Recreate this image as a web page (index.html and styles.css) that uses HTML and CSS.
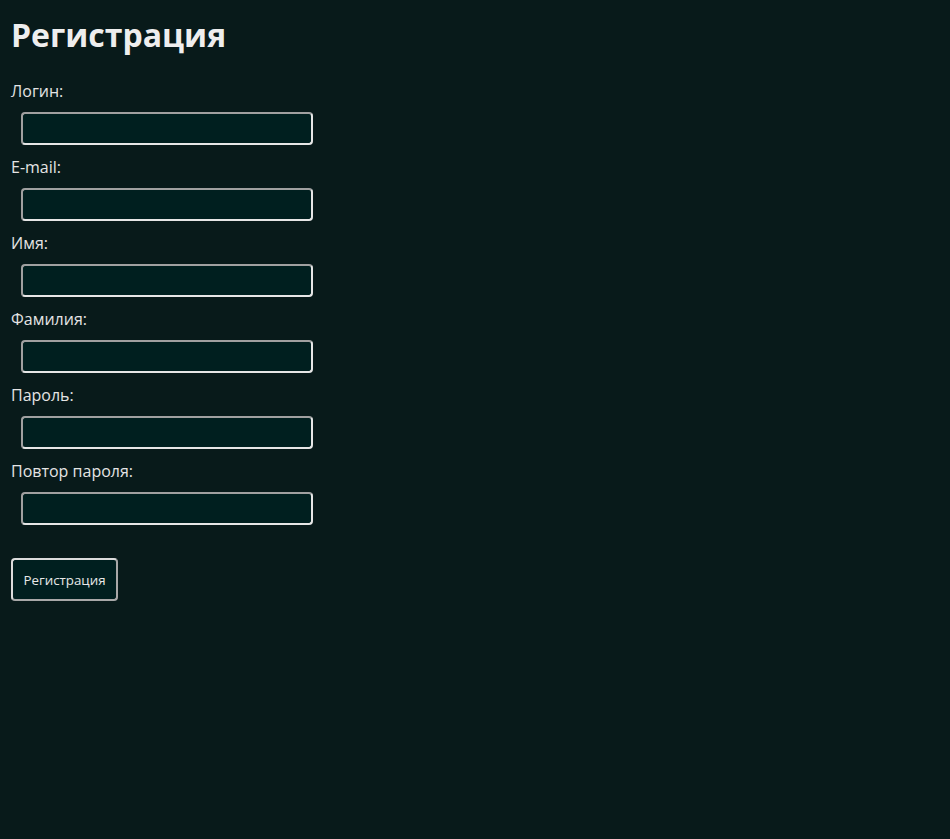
FILE: index.html
```html
<!DOCTYPE html>
<html lang="ru">
<head>
<meta charset="utf-8">
<title>Регистрация</title>
<link rel="stylesheet" href="styles.css">
</head>
<body>
<main class="page">
  <h1 class="title">Регистрация</h1>
  <form class="form">
    <label class="label" for="login">Логин:</label>
    <input class="field" id="login" type="text">
    <label class="label" for="email">E-mail:</label>
    <input class="field" id="email" type="text">
    <label class="label" for="name">Имя:</label>
    <input class="field" id="name" type="text">
    <label class="label" for="surname">Фамилия:</label>
    <input class="field" id="surname" type="text">
    <label class="label" for="pass">Пароль:</label>
    <input class="field" id="pass" type="password">
    <label class="label" for="pass2">Повтор пароля:</label>
    <input class="field" id="pass2" type="password">
    <button class="btn" type="button">Регистрация</button>
  </form>
</main>
</body>
</html>
```
FILE: styles.css
```css
html, body {
  margin: 0;
  padding: 0;
  background: #081a1a;
}
body {
  font-family: "Open Sans", "DejaVu Sans", sans-serif;
  color: #e4e4e4;
  min-height: 839px;
}
.page {
  padding: 13px 8px 0 11px;
}
.title {
  margin: 0;
  font-size: 32px;
  font-weight: 700;
  line-height: 43px;
  color: #eeeeee;
}
.form {
  margin-top: 24px;
  display: flex;
  flex-direction: column;
  align-items: flex-start;
}
.label {
  display: block;
  font-size: 16px;
  line-height: 22px;
}
.field {
  box-sizing: border-box;
  width: 292px;
  height: 33px;
  margin: 10px 0 11px 10px;
  background: #001f1f;
  border-style: solid;
  border-width: 2px;
  border-top-color: #a0a0a0;
  border-left-color: #a0a0a0;
  border-right-color: #e6e6e6;
  border-bottom-color: #e6e6e6;
  border-radius: 4px;
  color: #e4e4e4;
  font-family: inherit;
  font-size: 16px;
  padding: 0 6px;
}
.btn {
  box-sizing: border-box;
  margin-top: 22px;
  width: 107px;
  height: 43px;
  background: #001f1f;
  border-style: solid;
  border-width: 2px;
  border-top-color: #dcdcdc;
  border-left-color: #dcdcdc;
  border-right-color: #a8a8a8;
  border-bottom-color: #a8a8a8;
  border-radius: 4px;
  color: #e8e8e8;
  font-family: inherit;
  font-size: 13.33px;
  padding: 0;
}
```
